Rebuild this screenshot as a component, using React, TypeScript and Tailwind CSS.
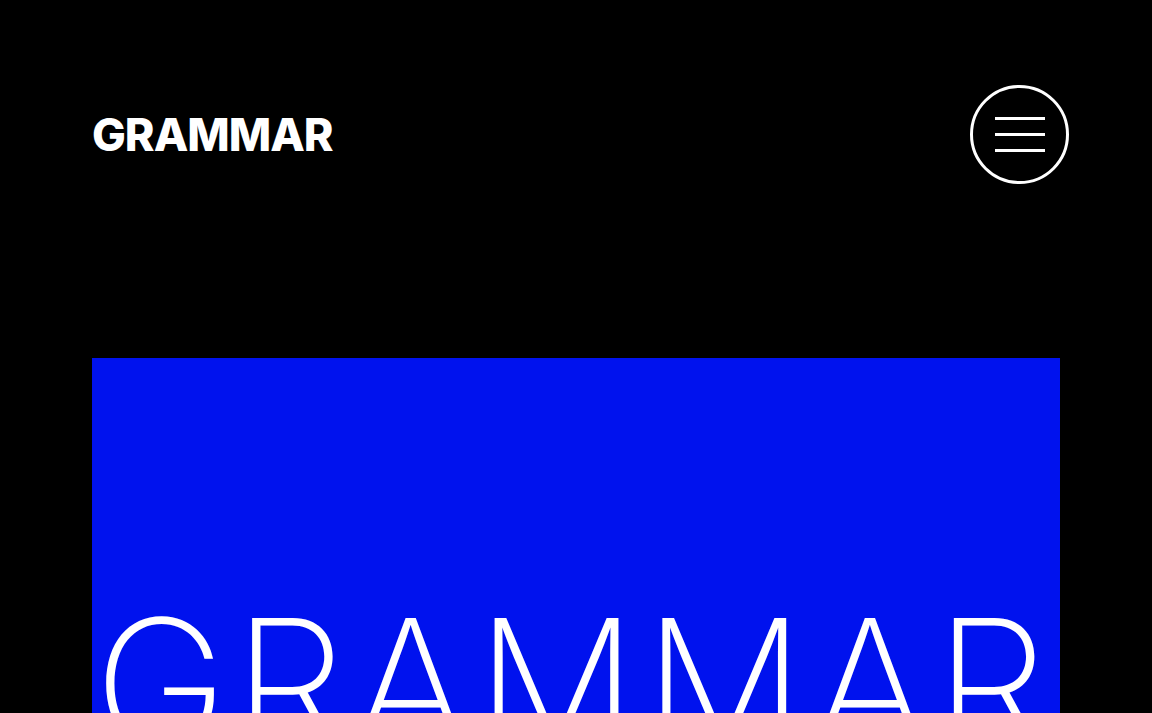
import React from "react";

export default function App() {
  return (
    <div className="min-h-[713px] h-[713px] overflow-hidden bg-black text-white" style={{ fontFamily: "Inter, 'Liberation Sans', sans-serif" }}>
      <header className="flex items-center justify-between pl-[92px] pr-[83px] pt-[85px]">
        <div className="text-[45px] font-extrabold leading-none tracking-[-1px]">GRAMMAR</div>
        <button className="flex h-[99px] w-[99px] flex-col items-center justify-center gap-[13px] rounded-full border-[3px] border-white">
          <span className="block h-[3px] w-[50px] bg-white" />
          <span className="block h-[3px] w-[50px] bg-white" />
          <span className="block h-[3px] w-[50px] bg-white" />
        </button>
      </header>
      <main className="mt-[174px] ml-[92px] w-[968px] h-[400px] bg-[#0012ee] overflow-hidden pt-[236px] pl-[2px]">
        <div className="text-[180px] font-extralight leading-none whitespace-nowrap tracking-[6px]">GRAMMAR</div>
      </main>
    </div>
  );
}
